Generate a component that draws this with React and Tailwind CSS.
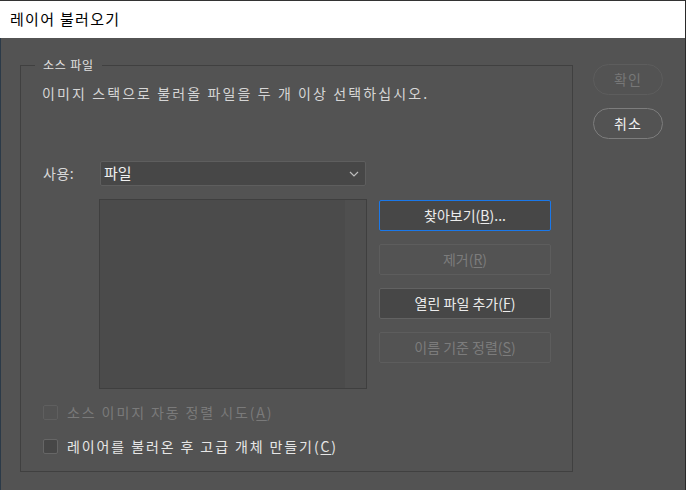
import React from 'react';

const font = { fontFamily: '"Noto Sans CJK KR", "Malgun Gothic", sans-serif' };

function Mn({ children }) {
  return <span className="underline underline-offset-2">{children}</span>;
}

function SideButton({ children, disabled, focused }) {
  return (
    <button
      className={`h-[31px] w-[172px] border rounded-[2px] flex items-center justify-center text-[14px] ${
        focused
          ? 'border-[#1a78ea] bg-[#474747] text-[#ececec]'
          : disabled
          ? 'border-[#5d5d5d] bg-[#535353] text-[#7c7c7c]'
          : 'border-[#626262] bg-[#474747] text-[#ececec]'
      }`}
    >
      {children}
    </button>
  );
}

function Check({ label, disabled }) {
  return (
    <label
      className={`flex items-center gap-[9px] text-[14px] tracking-[1.9px] ${
        disabled ? 'text-[#7a7a7a]' : 'text-[#e6e6e6]'
      }`}
    >
      <span
        className={`w-[15px] h-[15px] rounded-[2px] border ${
          disabled ? 'border-[#5f5f5f] bg-[#535353]' : 'border-[#666666] bg-[#474747]'
        }`}
      />
      <span>{label}</span>
    </label>
  );
}

export default function App() {
  return (
    <div className="w-[686px] h-[490px] flex flex-col bg-[#2a2a2a] overflow-hidden" style={font}>
      {/* 타이틀 바 */}
      <div className="h-[38px] border-t border-[#333] bg-white flex items-center pl-[10px] mr-[1px]">
        <span className="text-[15px] tracking-[1.3px] text-black">레이어 불러오기</span>
      </div>

      <div className="flex-1 flex bg-[#535353] border-l border-[#2b3a48] mr-[1px]">
        {/* 소스 파일 */}
        <fieldset className="ml-[19px] mt-[19px] w-[553px] h-[415px] border border-[#404040]">
          <legend className="ml-[14px] px-[8px] text-[12px] leading-[16px] tracking-[0.8px] text-[#e2e2e2]">
            소스 파일
          </legend>
          <p className="ml-[21px] mt-[10px] text-[14px] leading-[20px] text-[#d6d6d6] tracking-[2.1px]">
            이미지 스택으로 불러올 파일을 두 개 이상 선택하십시오.
          </p>

          <div className="flex items-center mt-[58px] ml-[22px]">
            <span className="w-[57px] text-[14px] tracking-[0.5px] text-[#d8d8d8]">사용:</span>
            <div className="w-[266px] h-[25px] bg-[#474747] border border-[#5e5e5e] rounded-[2px] flex items-center justify-between pl-[3px] pr-[6px]">
              <span className="text-[15px] text-[#f0f0f0]">파일</span>
              <svg width="10" height="6" viewBox="0 0 10 6" fill="none" stroke="#bdbdbd" strokeWidth="1.2">
                <path d="M1 1l4 4 4-4" />
              </svg>
            </div>
          </div>

          <div className="flex mt-[13px] ml-[78px] gap-[12px]">
            <div className="w-[268px] h-[190px] border border-[#3f3f3f] bg-[#4b4b4b] flex">
              <div className="flex-1" />
              <div className="w-[21px] bg-[#4f4f4f]" />
            </div>
            <div className="flex flex-col gap-[13px] mt-[1px]">
              <SideButton focused>
                찾아보기(<Mn>B</Mn>)...
              </SideButton>
              <SideButton disabled>
                제거(<Mn>R</Mn>)
              </SideButton>
              <SideButton>
                열린 파일 추가(<Mn>F</Mn>)
              </SideButton>
              <SideButton disabled>
                이름 기준 정렬(<Mn>S</Mn>)
              </SideButton>
            </div>
          </div>

          <div className="ml-[22px] mt-[13px] flex flex-col gap-[13px]">
            <Check disabled label={<>소스 이미지 자동 정렬 시도(<Mn>A</Mn>)</>} />
            <Check label={<>레이어를 불러온 후 고급 개체 만들기(<Mn>C</Mn>)</>} />
          </div>
        </fieldset>

        {/* 확인 / 취소 */}
        <div className="ml-[20px] mt-[26px] flex flex-col gap-[13px]">
          <button className="w-[70px] h-[31px] rounded-full border border-[#5d5d5d] text-[14px] tracking-[1px] text-[#777777]">
            확인
          </button>
          <button className="w-[70px] h-[31px] rounded-full border border-[#7d7d7d] text-[14px] tracking-[1px] text-[#f2f2f2]">
            취소
          </button>
        </div>
      </div>
    </div>
  );
}
